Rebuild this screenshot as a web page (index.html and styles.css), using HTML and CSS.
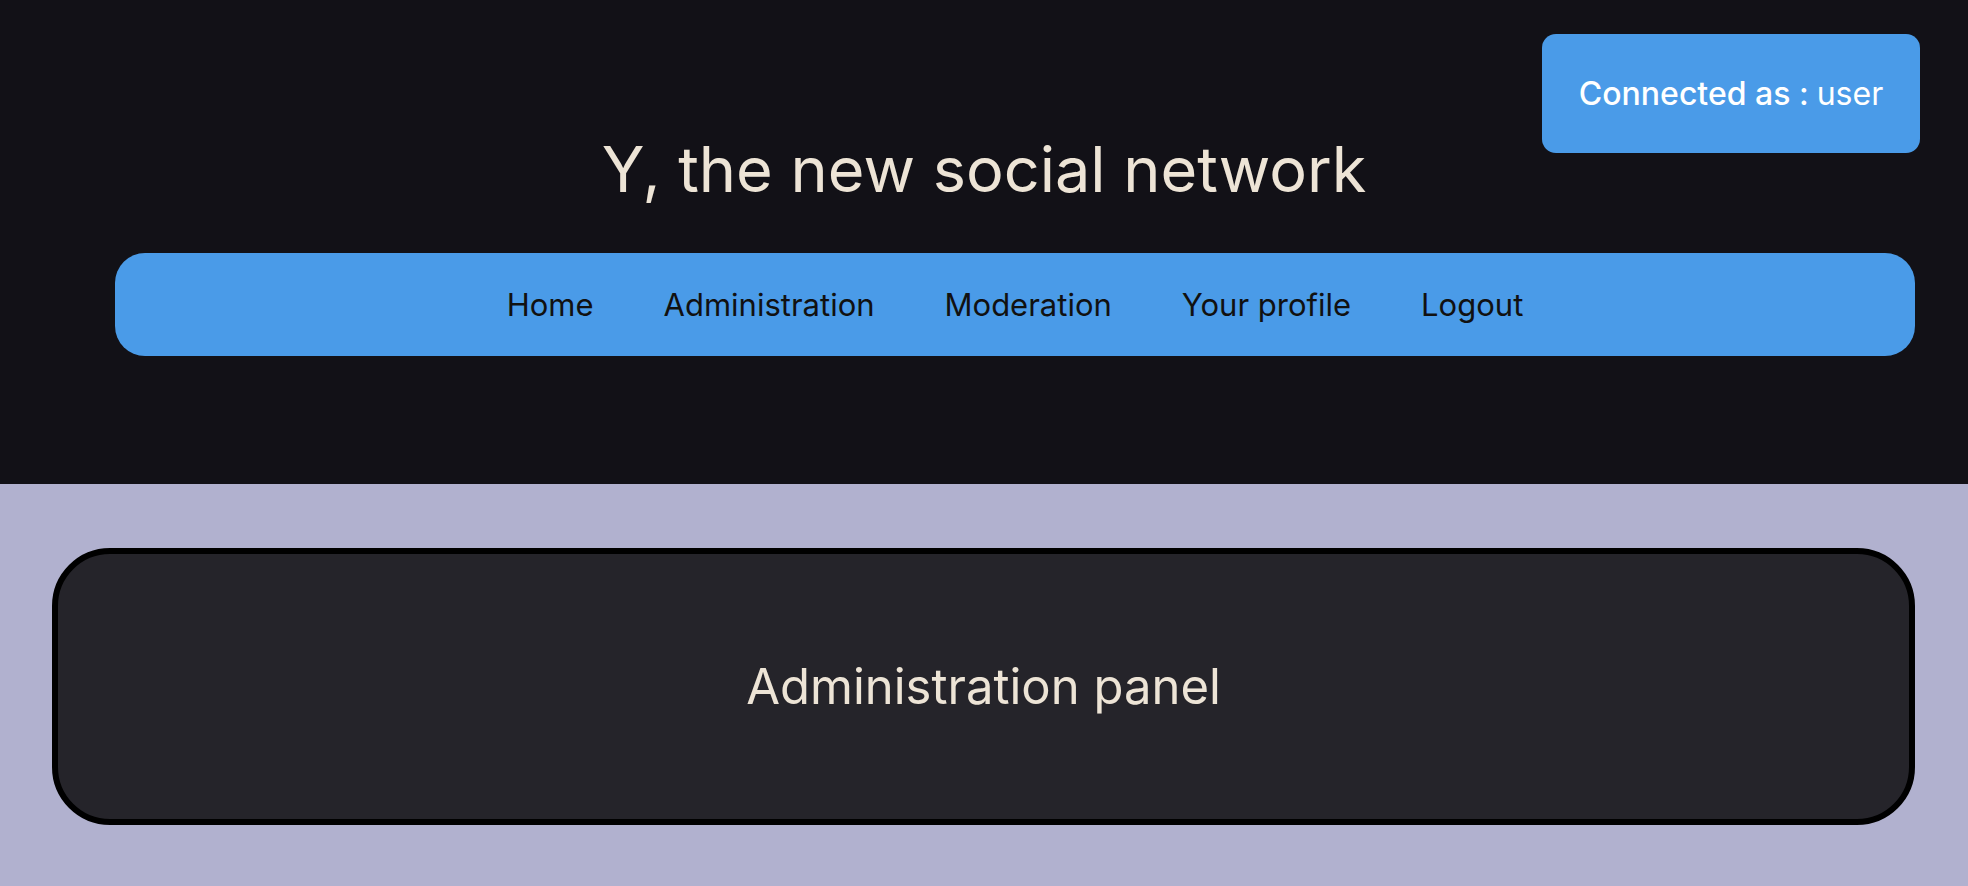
FILE: index.html
```html
<!DOCTYPE html>
<html lang="en">
<head>
<meta charset="utf-8">
<title>Y, the new social network</title>
<link rel="stylesheet" href="styles.css">
</head>
<body>
<header class="site-header">
  <div class="user-badge"><strong>Connected as :</strong> user</div>
  <h1 class="site-title">Y, the new social network</h1>
  <nav class="main-nav">
    <a href="#">Home</a>
    <a href="#">Administration</a>
    <a href="#">Moderation</a>
    <a href="#">Your profile</a>
    <a href="#">Logout</a>
  </nav>
</header>
<main class="content">
  <section class="panel">
    <h2 class="panel-title">Administration panel</h2>
  </section>
</main>
</body>
</html>
```
FILE: styles.css
```css
* { box-sizing: border-box; }
html, body { margin: 0; padding: 0; }
body {
  background: #b1b1cf;
  font-family: Inter, "Noto Sans", sans-serif;
  min-height: 886px;
}
.site-header {
  position: relative;
  background: #121117;
  height: 484px;
  display: flex;
  flex-direction: column;
  align-items: center;
  padding-top: 133px;
}
.user-badge {
  position: absolute;
  top: 34px;
  right: 48px;
  width: 378px;
  height: 119px;
  background: #4a9be8;
  border-radius: 14px;
  color: #fff;
  font-size: 32px;
  display: flex;
  align-items: center;
  justify-content: center;
  gap: 8px;
}
.user-badge strong { font-weight: 550; }
.site-title {
  margin: 0;
  font-size: 63px;
  font-weight: 400;
  color: #ede4d6;
  line-height: 72px;
}
.main-nav {
  margin-top: 48px;
  align-self: stretch;
  margin-left: 115px;
  margin-right: 53px;
  height: 103px;
  background: #4a9be8;
  border-radius: 30px;
  display: flex;
  align-items: center;
  justify-content: center;
  gap: 70px;
}
.main-nav a {
  color: #111;
  text-decoration: none;
  font-size: 31px;
}
.content {
  padding: 64px 53px 0 52px;
}
.panel {
  height: 277px;
  background: #25242a;
  border: 6px solid #000;
  border-radius: 58px;
  display: flex;
  align-items: center;
  justify-content: center;
}
.panel-title {
  margin: 0;
  font-size: 49px;
  font-weight: 400;
  color: #ede4d6;
}
```
